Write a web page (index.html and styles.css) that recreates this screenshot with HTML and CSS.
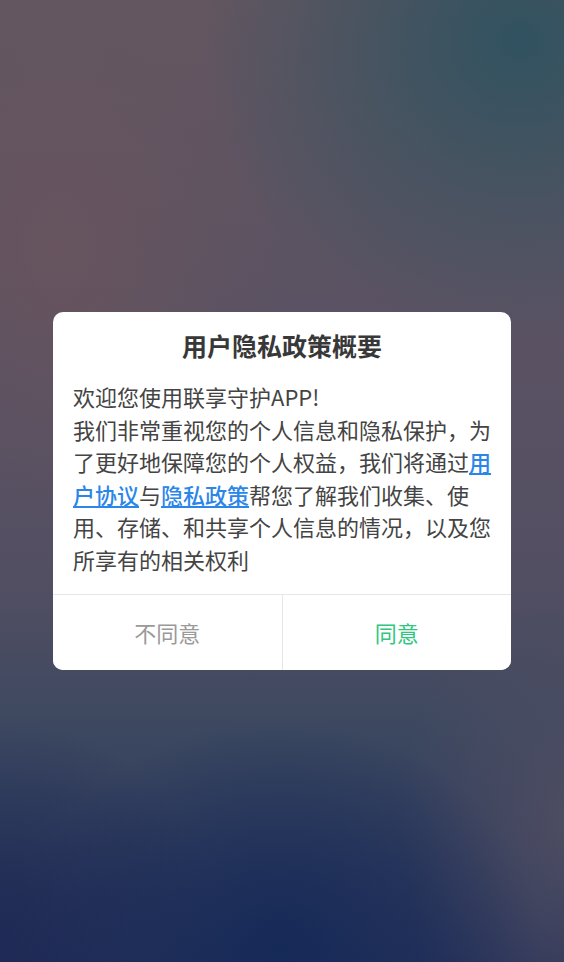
FILE: index.html
```html
<!DOCTYPE html>
<html lang="zh-CN">
<head>
<meta charset="utf-8">
<title>用户隐私政策概要</title>
<link rel="stylesheet" href="styles.css">
</head>
<body>
<div class="screen">
  <div class="dialog">
    <h1 class="dialog-title">用户隐私政策概要</h1>
    <p class="dialog-body">欢迎您使用联享守护APP!<br>我们非常重视您的个人信息和隐私保护，为了更好地保障您的个人权益，我们将通过<a class="link" href="#">用户协议</a>与<a class="link" href="#">隐私政策</a>帮您了解我们收集、使用、存储、和共享个人信息的情况，以及您所享有的相关权利</p>
    <div class="dialog-actions">
      <button class="btn btn-decline">不同意</button>
      <button class="btn btn-accept">同意</button>
    </div>
  </div>
</div>
</body>
</html>
```
FILE: styles.css
```css
html, body {
  margin: 0;
  padding: 0;
}
body {
  font-family: "Noto Sans CJK SC", "Noto Sans", sans-serif;
}
.screen {
  width: 564px;
  height: 962px;
  box-sizing: border-box;
  padding-top: 312px;
  display: flex;
  flex-direction: column;
  align-items: center;
  background:
    radial-gradient(ellipse 320px 300px at 520px 40px, rgba(46, 82, 96, 0.95), rgba(46, 82, 96, 0) 100%),
    radial-gradient(ellipse 260px 230px at 280px 950px, rgba(22, 42, 88, 1), rgba(22, 42, 88, 0) 100%),
    radial-gradient(ellipse 170px 260px at 570px 820px, rgba(80, 78, 98, 0.9), rgba(80, 78, 98, 0) 100%),
    radial-gradient(ellipse 220px 220px at 0px 940px, rgba(28, 40, 84, 0.85), rgba(28, 40, 84, 0) 100%),
    radial-gradient(ellipse 220px 280px at 60px 250px, rgba(104, 84, 94, 0.9), rgba(104, 84, 94, 0) 100%),
    linear-gradient(180deg, #635660 0%, #5a5263 35%, #534f62 60%, #3c4860 76%, #28325a 100%);
}
.dialog {
  width: 458px;
  background: #ffffff;
  border-radius: 10px;
  overflow: hidden;
}
.dialog-title {
  margin: 0;
  padding: 17px 20px 0;
  font-size: 25px;
  line-height: 33px;
  font-weight: 600;
  color: #383838;
  text-align: center;
}
.dialog-body {
  margin: 18px 0 0;
  padding: 0 18px 18px 20px;
  font-size: 22px;
  line-height: 32.6px;
  color: #444444;
}
.link {
  color: #2a86e8;
  font-weight: 500;
  text-decoration: underline;
  text-underline-offset: 2px;
  text-decoration-thickness: 1.5px;
}
.dialog-actions {
  display: flex;
  border-top: 1px solid #e6e6e6;
}
.btn {
  flex: 1;
  height: 75px;
  border: none;
  background: #ffffff;
  font-family: "Noto Sans CJK SC", "Noto Sans", sans-serif;
  font-size: 22px;
  padding: 0;
  margin: 0;
}
.btn-decline {
  color: #9a9a9a;
  border-right: 1px solid #e6e6e6;
}
.btn-accept {
  color: #2fc67f;
}
```
